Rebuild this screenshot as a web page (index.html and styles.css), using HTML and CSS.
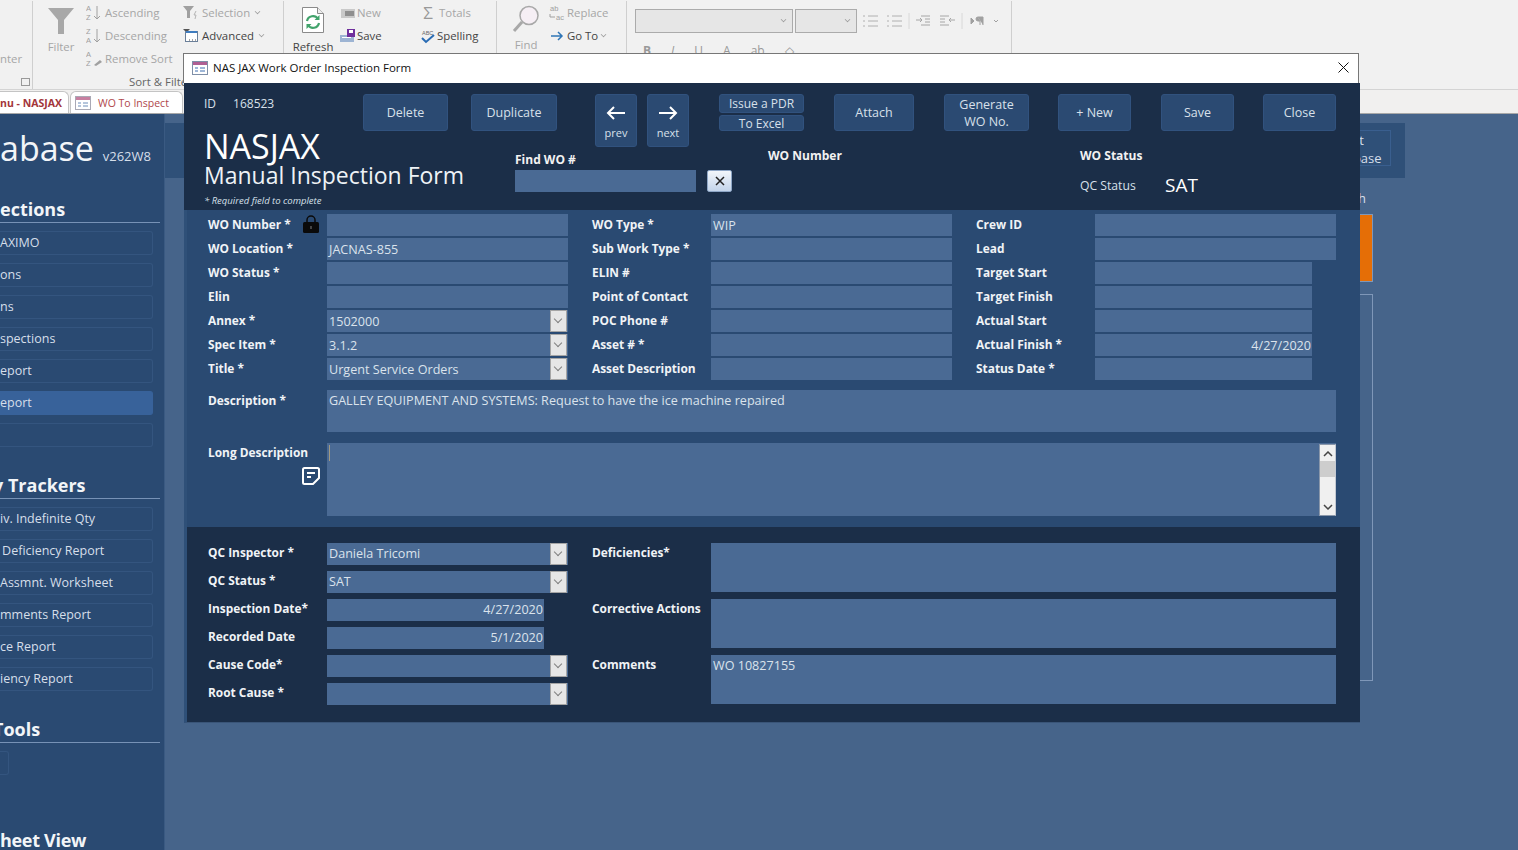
FILE: index.html
```html
<!DOCTYPE html>
<html lang="en">
<head>
    <meta charset="UTF-8">
    <meta name="viewport" content="width=device-width, initial-scale=1.0">
    <title>NAS JAX Work Order Inspection Form</title>
    <link rel="stylesheet" href="styles.css">
</head>
<body>
    <!-- Access ribbon behind the form -->
    <div class="ribbon">
        <div class="group group-clip">
            <div class="clip-text">nter</div>
            <span class="launcher"></span>
        </div>
        <div class="group group-sort">
            <div class="big-item filter-item">
                <svg width="28" height="26" viewBox="0 0 28 26"><path d="M1 0h26L17 12v14h-6V12z" fill="#a8a8a8"/></svg>
                <span>Filter</span>
            </div>
            <div class="small-col sort-col">
                <div class="small-item"><svg width="18" height="18" viewBox="0 0 18 18"><text x="0" y="7" class="tiny">A</text><text x="0" y="16" class="tiny">Z</text><path d="M11 2v13M8 12l3 3 3-3" fill="none" stroke="#a0a0a0"/></svg>Ascending</div>
                <div class="small-item"><svg width="18" height="18" viewBox="0 0 18 18"><text x="0" y="7" class="tiny">Z</text><text x="0" y="16" class="tiny">A</text><path d="M11 2v13M8 12l3 3 3-3" fill="none" stroke="#a0a0a0"/></svg>Descending</div>
                <div class="small-item"><svg width="18" height="18" viewBox="0 0 18 18"><text x="0" y="7" class="tiny">A</text><text x="0" y="16" class="tiny">Z</text><path d="M8 15l6-5 2 2-6 4z" fill="#a0a0a0"/></svg>Remove Sort</div>
            </div>
            <div class="small-col select-col">
                <div class="small-item"><svg width="16" height="16" viewBox="0 0 16 16"><path d="M0 1h11L7 6v7H4V6z" fill="#a0a0a0"/><path d="M13 6l-2 4h2l-1 4" fill="none" stroke="#b5b5b5"/></svg>Selection <i class="drop"></i></div>
                <div class="small-item dark"><svg width="16" height="16" viewBox="0 0 16 16"><path d="M0 1h7L4 4v2H3V4z" fill="#555"/><rect x="2.500" y="3.500" width="12" height="10" fill="#fff" stroke="#6a7f99"/><path d="M3 3h11v2H3z" fill="#3f7cbf"/><path d="M6 12h1M9 12h1M12 12h1" stroke="#444"/></svg>Advanced <i class="drop"></i></div>
                <div class="group-label sort-label">Sort &amp; Filter</div>
            </div>
        </div>
        <div class="group group-records">
            <div class="big-item refresh-item">
                <svg width="24" height="28" viewBox="0 0 24 28"><path d="M1.500 1.500h15l6 6v19h-21z" fill="#fff" stroke="#8a8a8a"/><path d="M16.500 1.500v6h6" fill="#eee" stroke="#8a8a8a"/><path d="M6 15a6 6 0 0 1 11-2M18 17a6 6 0 0 1-11 2" fill="none" stroke="#41a36b" stroke-width="2.200"/><path d="M18.500 9v5h-5zM5.500 23v-5h5z" fill="#41a36b"/></svg>
                <span>Refresh</span>
            </div>
            <div class="small-col new-col">
                <div class="small-item"><svg width="16" height="14" viewBox="0 0 16 14"><rect x="1" y="3" width="14" height="9" fill="#c9c9c9"/><rect x="5" y="5" width="9" height="5" fill="#8f8f8f"/></svg>New</div>
                <div class="small-item dark"><svg width="16" height="14" viewBox="0 0 16 14"><rect x="0" y="6" width="14" height="7" fill="#9db4d3"/><rect x="2" y="8" width="9" height="1" fill="#fff"/><rect x="7" y="0" width="8" height="8" fill="#6f2f9c"/><rect x="9" y="1" width="4" height="3" fill="#fff"/></svg>Save</div>
            </div>
            <div class="small-col totals-col">
                <div class="small-item"><span class="sigma">&Sigma;</span>Totals</div>
                <div class="small-item dark"><svg width="16" height="16" viewBox="0 0 16 16"><text x="2" y="7" class="abc">ABC</text><path d="M2 10l4 4 8-7" fill="none" stroke="#2a6cb4" stroke-width="2"/></svg>Spelling</div>
            </div>
        </div>
        <div class="group group-find">
            <div class="big-item find-item">
                <svg width="28" height="28" viewBox="0 0 28 28"><circle cx="17" cy="10.500" r="9" fill="#f6eff5" stroke="#a8a8a8" stroke-width="1.500"/><path d="M10 17L2 26" stroke="#a8a8a8" stroke-width="3"/></svg>
                <span>Find</span>
            </div>
            <div class="small-col">
                <div class="small-item"><svg width="17" height="18" viewBox="0 0 17 18"><text x="1" y="7" class="tiny">ab</text><text x="7" y="16" class="tiny">ac</text><path d="M1 10v3h5" fill="none" stroke="#a0a0a0"/></svg>Replace</div>
                <div class="small-item dark"><svg width="17" height="16" viewBox="0 0 17 16"><path d="M2 8h11M9 4l4 4-4 4" fill="none" stroke="#2f75b5" stroke-width="1.500"/></svg>Go To <i class="drop"></i></div>
            </div>
        </div>
        <div class="group group-text">
            <div class="text-row">
                <span class="ribbon-combo font-combo"><i class="drop"></i></span>
                <span class="ribbon-combo size-combo"><i class="drop"></i></span>
                <svg class="text-icons" width="146" height="16" viewBox="0 0 146 16">
                    <path d="M1 3h2M1 8h2M1 13h2M6 3h10M6 8h10M6 13h10M25 3h2M25 8h2M25 13h2M30 3h10M30 8h10M30 13h10" stroke="#b0b0b0" fill="none"/>
                    <path d="M47 0v16" stroke="#d8d8d8"/>
                    <path d="M59 3h9M63 6h5M63 9h5M59 12h9M54 7h6M58 5l2 2-2 2" stroke="#a6a6a6" fill="none"/>
                    <path d="M78 3h9M78 6h5M78 9h5M78 12h9M93 7h-6M89 5l-2 2 2 2" stroke="#a6a6a6" fill="none"/>
                    <path d="M100 0v16" stroke="#d8d8d8"/>
                    <path d="M109 5l3 3-3 3zM116 4h5v8M118 4v8M116 4a2 2 0 0 0 0 4h2" fill="#a0a0a0" stroke="#a0a0a0"/>
                    <path d="M132 7l2 2 2-2" stroke="#a0a0a0" fill="none"/>
                </svg>
            </div>
            <div class="format-row">
                <b>B</b><i>I</i><u>U</u><span class="format-gap">A</span><span>ab</span><span>&#9671;</span>
            </div>
        </div>
    </div>

    <!-- Navigation tabs -->
    <div class="tabs">
        <div class="tab tab-menu">nu - NASJAX</div>
        <div class="tab tab-form">
            <svg class="form-icon" width="16" height="14" viewBox="0 0 16 14"><rect x=".5" y=".5" width="15" height="13" fill="#fff" stroke="#a9a9b5"/><rect x="1" y="1" width="14" height="3" fill="#c77fa0"/><path d="M3 7h3M3 10h3M8 7h5M8 10h5" stroke="#6d8db8"/></svg>
            WO To Inspect
        </div>
    </div>

    <!-- Main menu form behind the popup -->
    <div class="main">
        <aside class="sidebar">
            <div class="side-title">abase <small>v262W8</small></div>
            <div class="side-head first">ections</div>
            <div class="side-links">
                <div class="side-link">AXIMO</div>
                <div class="side-link">ons</div>
                <div class="side-link">ns</div>
                <div class="side-link">spections</div>
                <div class="side-link">eport</div>
                <div class="side-link active">eport</div>
                <div class="side-link"></div>
            </div>
            <div class="side-head cut-trackers">y Trackers</div>
            <div class="side-links">
                <div class="side-link">iv. Indefinite Qty</div>
                <div class="side-link">&#8201;Deficiency Report</div>
                <div class="side-link">Assmnt. Worksheet</div>
                <div class="side-link">mments Report</div>
                <div class="side-link">ce Report</div>
                <div class="side-link">iency Report</div>
            </div>
            <div class="side-head cut-tools">Tools</div>
            <div class="side-links">
                <div class="side-link tool-link"></div>
            </div>
            <div class="side-head last">heet View</div>
        </aside>
        <div class="content">
            <div class="content-head">
                <div class="exit-btn">Exit<br>Database</div>
            </div>
            <div class="content-stub">
                <div class="stub-h">h</div>
                <div class="stub-orange"></div>
                <div class="stub-outline"></div>
            </div>
        </div>
    </div>

    <!-- Popup form -->
    <div class="window">
        <div class="titlebar">
            <svg class="form-icon" width="16" height="14" viewBox="0 0 16 14"><rect x=".5" y=".5" width="15" height="13" fill="#fff" stroke="#7f8fa8"/><rect x="1" y="1" width="14" height="3" fill="#b05f93"/><path d="M3 7h3M3 10h3M8 7h5M8 10h5" stroke="#3f6fb0"/></svg>
            <span>NAS JAX Work Order Inspection Form</span>
            <svg class="close-x" width="11" height="11" viewBox="0 0 11 11"><path d="M.5.500l10 10M10.500.500l-10 10" stroke="#111" fill="none"/></svg>
        </div>

        <div class="form-head">
            <div class="head-top">
                <div class="record-id"><span>ID</span><span>168523</span></div>
                <button class="btn w-delete">Delete</button>
                <button class="btn w-dup">Duplicate</button>
                <button class="btn nav-btn w-prev">
                    <svg width="20" height="14" viewBox="0 0 20 14"><path d="M19 7H2M8 1L2 7l6 6" fill="none" stroke="#fff" stroke-width="2"/></svg>
                    <span>prev</span>
                </button>
                <button class="btn nav-btn w-next">
                    <svg width="20" height="14" viewBox="0 0 20 14"><path d="M1 7h17M12 1l6 6-6 6" fill="none" stroke="#fff" stroke-width="2"/></svg>
                    <span>next</span>
                </button>
                <div class="btn-stack">
                    <button class="btn">Issue a PDR</button>
                    <button class="btn">To Excel</button>
                </div>
                <button class="btn w-attach">Attach</button>
                <button class="btn two-line w-gen">Generate<br>WO No.</button>
                <button class="btn w-new">+ New</button>
                <button class="btn w-save">Save</button>
                <button class="btn w-close">Close</button>
            </div>
            <div class="head-bottom">
                <div class="form-title">
                    <h1>NASJAX</h1>
                    <h2>Manual Inspection Form</h2>
                    <p>* Required field to complete</p>
                </div>
                <div class="find-wo">
                    <label>Find WO #</label>
                    <div class="find-row">
                        <div class="box find-box"></div>
                        <button class="clear-btn">
                            <svg width="10" height="10" viewBox="0 0 10 10"><path d="M1 1l8 8M9 1L1 9" stroke="#222" stroke-width="1.500"/></svg>
                        </button>
                    </div>
                </div>
                <div class="head-number">WO Number</div>
                <div class="head-status">
                    <div class="label">WO Status</div>
                    <div class="qc-row"><span>QC Status</span><strong>SAT</strong></div>
                </div>
            </div>
        </div>

        <div class="form-main">
            <div class="field-grid">
                <div class="field"><label>WO Number *<svg class="lock" width="16" height="18" viewBox="0 0 16 18"><path d="M4 8V5a4 4 0 0 1 8 0v3" fill="none" stroke="#0a0a0a" stroke-width="1.500"/><rect y="7" width="16" height="11" rx="1.500" fill="#0a0a0a"/><rect x="7" y="11" width="2" height="3" fill="#444"/></svg></label><div class="box"></div></div>
                <div class="field"><label>WO Type *</label><div class="box">WIP</div></div>
                <div class="field"><label>Crew ID</label><div class="box"></div></div>

                <div class="field"><label>WO Location *</label><div class="box">JACNAS-855</div></div>
                <div class="field"><label>Sub Work Type *</label><div class="box"></div></div>
                <div class="field"><label>Lead</label><div class="box"></div></div>

                <div class="field"><label>WO Status *</label><div class="box"></div></div>
                <div class="field"><label>ELIN #</label><div class="box"></div></div>
                <div class="field"><label>Target Start</label><div class="box short"></div></div>

                <div class="field"><label>Elin</label><div class="box"></div></div>
                <div class="field"><label>Point of Contact</label><div class="box"></div></div>
                <div class="field"><label>Target Finish</label><div class="box short"></div></div>

                <div class="field"><label>Annex *</label><div class="box combo">1502000<span class="arrow"></span></div></div>
                <div class="field"><label>POC Phone #</label><div class="box"></div></div>
                <div class="field"><label>Actual Start</label><div class="box short"></div></div>

                <div class="field"><label>Spec Item *</label><div class="box combo">3.1.2<span class="arrow"></span></div></div>
                <div class="field"><label>Asset # *</label><div class="box"></div></div>
                <div class="field"><label>Actual Finish *</label><div class="box short date">4/27/2020</div></div>

                <div class="field"><label>Title *</label><div class="box combo">Urgent Service Orders<span class="arrow"></span></div></div>
                <div class="field"><label>Asset Description</label><div class="box"></div></div>
                <div class="field"><label>Status Date *</label><div class="box short"></div></div>
            </div>

            <div class="field wide desc-field">
                <label>Description *</label>
                <div class="box area">GALLEY EQUIPMENT AND SYSTEMS: Request to have the ice machine repaired</div>
            </div>
            <div class="field wide long-field">
                <label class="long-label">Long Description
                    <svg class="note" width="18" height="18" viewBox="0 0 18 18"><path d="M2.500 1h13A1.500 1.500 0 0 1 17 2.500V11l-6 6H2.500A1.500 1.500 0 0 1 1 15.500v-13A1.500 1.500 0 0 1 2.500 1z" fill="none" stroke="#fff" stroke-width="2"/><path d="M5 6h8M5 10h4" stroke="#fff" stroke-width="2"/></svg>
                </label>
                <div class="box area long-box">
                    <span class="caret"></span>
                    <div class="scrollbar">
                        <svg width="10" height="6" viewBox="0 0 10 6"><path d="M1 5l4-4 4 4" fill="none" stroke="#444" stroke-width="1.500"/></svg>
                        <span class="thumb"></span>
                        <svg class="scroll-down" width="10" height="6" viewBox="0 0 10 6"><path d="M1 1l4 4 4-4" fill="none" stroke="#444" stroke-width="1.500"/></svg>
                    </div>
                </div>
            </div>
        </div>

        <div class="form-qc">
            <div class="qc-left">
                <div class="field"><label>QC Inspector *</label><div class="box combo">Daniela Tricomi<span class="arrow"></span></div></div>
                <div class="field"><label>QC Status *</label><div class="box combo">SAT<span class="arrow"></span></div></div>
                <div class="field"><label>Inspection Date*</label><div class="box date-short">4/27/2020</div></div>
                <div class="field"><label>Recorded Date</label><div class="box date-short">5/1/2020</div></div>
                <div class="field"><label>Cause Code*</label><div class="box combo"><span class="arrow"></span></div></div>
                <div class="field"><label>Root Cause *</label><div class="box combo"><span class="arrow"></span></div></div>
            </div>
            <div class="qc-right">
                <div class="field wide"><label>Deficiencies*</label><div class="box area tall"></div></div>
                <div class="field wide"><label>Corrective Actions</label><div class="box area tall"></div></div>
                <div class="field wide"><label>Comments</label><div class="box area tall">WO 10827155</div></div>
            </div>
        </div>
    </div>
</body>
</html>
```

FILE: styles.css
```css
* {
    box-sizing: border-box;
}

html, body {
    height: 100%;
}

body {
    margin: 0;
    overflow: hidden;
    font-family: "Open Sans", "Noto Sans", sans-serif;
    font-size: 13px;
    background-color: #46648a;
    color: #333;
}

/* ribbon */
.ribbon {
    display: flex;
    height: 90px;
    background-color: #f1f1f1;
    border-bottom: 1px solid #d4d4d4;
    font-size: 11.4px;
    color: #a6a6a6;
}

.group {
    position: relative;
    display: flex;
    height: 88px;
    margin-top: 1px;
    border-right: 1px solid #cfcfcf;
}

.group-clip {
    width: 33px;
}

.clip-text {
    margin-top: 50px;
}

.launcher {
    position: absolute;
    left: 21px;
    bottom: 3px;
    width: 9px;
    height: 8px;
    border: 1px solid #999;
}

.group-sort {
    width: 251px;
    padding-left: 14px;
}

.group-records {
    width: 213px;
    padding-left: 9px;
}

.group-find {
    width: 130px;
    padding-left: 15px;
}

.group-text {
    width: 385px;
    padding-left: 8px;
    display: block;
}

.big-item {
    display: flex;
    flex-direction: column;
    align-items: center;
    gap: 5px;
}

.filter-item {
    width: 28px;
    margin-right: 11px;
    padding-top: 7px;
}

.refresh-item {
    width: 40px;
    margin-right: 7px;
    padding-top: 5px;
    color: #444;
}

.find-item {
    width: 28px;
    margin-right: 9px;
    padding-top: 4px;
    gap: 4px;
}

.small-col {
    display: flex;
    flex-direction: column;
}

.sort-col {
    width: 97px;
}

.new-col {
    width: 80px;
}

.select-col .small-item {
    gap: 3px;
}

.small-item {
    display: flex;
    align-items: center;
    gap: 1px;
    height: 23px;
    white-space: nowrap;
}

.small-item.dark {
    color: #444;
}

.tiny {
    font-family: "Liberation Sans", sans-serif;
    font-size: 7.5px;
    fill: #a0a0a0;
}

.abc {
    font-family: "Liberation Sans", sans-serif;
    font-size: 5.500px;
    fill: #666;
}

.sigma {
    width: 16px;
    margin-right: 2px;
    font-size: 17px;
    line-height: 1;
    text-align: center;
    color: #999;
}

.drop {
    display: inline-block;
    width: 5px;
    height: 5px;
    margin-left: 2px;
    margin-bottom: 3px;
    border-right: 1px solid #999;
    border-bottom: 1px solid #999;
    transform: rotate(45deg) scale(.8);
}

.group-label {
    position: absolute;
    bottom: 0;
    white-space: nowrap;
    color: #666;
}

.sort-label {
    left: 96px;
}

.text-row {
    display: flex;
    align-items: center;
    gap: 2px;
    padding-top: 8px;
}

.ribbon-combo {
    display: flex;
    justify-content: flex-end;
    align-items: center;
    height: 24px;
    padding-right: 6px;
    background-color: #e6e6e6;
    border: 1px solid #ababab;
}

.font-combo {
    width: 158px;
}

.size-combo {
    width: 62px;
}

.text-icons {
    margin-left: 3px;
}

.format-row {
    display: flex;
    gap: 20px;
    padding: 9px 0 0 8px;
    font-size: 12px;
    color: #999;
}

/* tabs */
.tabs {
    display: flex;
    align-items: flex-end;
    height: 24px;
    padding-top: 2px;
    background-color: #f1f0ef;
    border-bottom: 1px solid #a8a8a8;
}

.tab {
    display: flex;
    align-items: center;
    height: 22px;
    background-color: #fff;
    border: 1px solid #c4c4c4;
    border-bottom: 0;
    border-radius: 0 6px 0 0;
    font-size: 10.5px;
    color: #a3353a;
}

.tab-menu {
    width: 69px;
    border-left: 0;
    font-weight: 700;
}

.tab-form {
    width: 113px;
    margin-left: 1px;
    gap: 7px;
    padding-left: 4px;
    border-radius: 6px 6px 0 0;
    color: #b0484c;
}

/* main menu behind the popup */
.main {
    display: flex;
    height: 736px;
}

.sidebar {
    flex: none;
    width: 165px;
    height: 100%;
    padding-top: 12px;
    overflow: hidden;
    background-color: #2a4a72;
    border-right: 1px solid #3a5a82;
    font-size: 12.5px;
    color: #d6dfea;
}

.side-title {
    height: 45px;
    font-size: 34px;
    line-height: 44px;
    color: #f2f5f8;
    white-space: nowrap;
}

.side-title small {
    font-size: 13px;
    color: #d6dfea;
}

.side-head {
    height: 28px;
    margin: 24px 4px 8px 0;
    border-bottom: 1px solid #7792b6;
    font-size: 18px;
    font-weight: 700;
    line-height: 29px;
    color: #f2f5f8;
    white-space: nowrap;
}

.side-head.cut-trackers {
    text-indent: -7px;
}

.side-head.cut-tools {
    text-indent: -7px;
}

.side-head.last {
    margin-top: 51px;
    letter-spacing: -.3px;
}

.side-links {
    display: flex;
    flex-direction: column;
    gap: 8px;
}

.side-link {
    width: 153px;
    height: 24px;
    border: 1px solid #34557f;
    border-left: 0;
    border-radius: 0 3px 3px 0;
    line-height: 22px;
    white-space: nowrap;
}

.side-link.active {
    background-color: #38629a;
    border-color: #38629a;
}

.side-link.tool-link {
    width: 9px;
}

.content {
    flex: 1;
}

.content-head {
    display: flex;
    justify-content: flex-end;
    width: 1240px;
    height: 55px;
    margin-top: 9px;
    padding: 7px 14px 0 0;
    background-color: #2f5078;
}

.exit-btn {
    width: 76px;
    height: 36px;
    border: 1px solid #3a5f8f;
    font-size: 13px;
    line-height: 18px;
    text-align: center;
    color: #d6dfea;
}

.content-stub {
    display: flex;
    flex-direction: column;
    align-items: flex-end;
    width: 1208px;
    color: #d6dfea;
}

.stub-h {
    height: 36px;
    padding-top: 11px;
    line-height: 18px;
    margin-right: 7px;
}

.stub-orange {
    width: 30px;
    height: 68px;
    background-color: #e56e06;
    border: 1px solid #7f97b8;
}

.stub-outline {
    width: 30px;
    height: 387px;
    margin-top: 12px;
    border: 1px solid #7f97b8;
}

/* popup window */
.window {
    position: absolute;
    left: 183px;
    top: 53px;
    width: 1177px;
    height: 670px;
}

.titlebar {
    display: flex;
    align-items: center;
    height: 30px;
    width: 1176px;
    padding: 0 8px 2px 8px;
    background-color: #fff;
    border: 1px solid #777;
    border-bottom: 0;
    font-size: 11.5px;
    color: #111;
}

.titlebar .form-icon {
    margin-right: 5px;
}

.close-x {
    margin-left: auto;
    margin-right: 1px;
}

.form-head,
.form-main,
.form-qc {
    margin-left: 1px;
    width: 1176px;
}

.form-head {
    height: 127px;
    padding: 11px 0 0 20px;
    background-color: #1b2e48;
    color: #d8e0ea;
}

.head-top {
    display: flex;
    align-items: flex-start;
    height: 53px;
}

.record-id {
    display: flex;
    gap: 17px;
    width: 159px;
    padding-top: 1px;
    font-size: 12px;
    line-height: 18px;
}

.btn {
    height: 37px;
    padding: 0 0 1px;
    background-color: #2b4a72;
    border: 1px solid #31527e;
    border-radius: 3px;
    font-family: inherit;
    font-size: 12.5px;
    color: #d8e0ea;
}

.two-line {
    padding: 0;
    line-height: 17px;
}

.w-delete { width: 85px; }
.w-dup { width: 86px; margin-left: 23px; }
.w-prev { width: 42px; margin-left: 38px; }
.w-next { width: 42px; margin-left: 10px; }
.w-attach { width: 80px; margin-left: 30px; }
.w-gen { width: 85px; margin-left: 30px; }
.w-new { width: 73px; margin-left: 29px; }
.w-save { width: 73px; margin-left: 30px; }
.w-close { width: 73px; margin-left: 29px; }

.nav-btn {
    display: flex;
    flex-direction: column;
    align-items: center;
    gap: 5px;
    height: 53px;
    padding-top: 11px;
    font-size: 11px;
}

.btn-stack {
    display: flex;
    flex-direction: column;
    gap: 2px;
    width: 85px;
    margin-left: 30px;
}

.btn-stack .btn {
    height: 19px;
    padding: 0;
    font-size: 12px;
    line-height: 16px;
}

.btn-stack .btn + .btn {
    height: 16px;
}

.head-bottom {
    display: flex;
}

.form-title {
    width: 311px;
    margin-top: -18px;
    color: #fff;
}

.form-title h1 {
    margin: 0;
    font-size: 34px;
    font-weight: 400;
    line-height: 34px;
}

.form-title h2 {
    margin: 0;
    font-size: 23px;
    font-weight: 400;
    line-height: 24px;
    color: #eef2f6;
}

.form-title p {
    margin: 7px 0 0;
    font-size: 9.5px;
    font-style: italic;
    line-height: 14px;
    color: #d8e0ea;
}

.find-wo {
    width: 253px;
    padding-top: 4px;
}

.find-wo label,
.head-number,
.head-status .label {
    font-size: 12px;
    font-weight: 700;
    line-height: 18px;
    color: #f2f2f2;
}

.find-wo label {
    display: block;
    height: 19px;
}

.find-row {
    display: flex;
    gap: 11px;
}

.box.find-box {
    width: 181px;
}

.qc-row {
    display: flex;
    align-items: center;
    margin-top: 7px;
    font-size: 12.2px;
}

.head-number {
    width: 312px;
}

.qc-row span {
    width: 85px;
}

.qc-row strong {
    font-size: 19px;
    font-weight: 400;
    color: #fff;
}

.clear-btn {
    display: flex;
    align-items: center;
    justify-content: center;
    width: 25px;
    height: 22px;
    padding: 0;
    background: linear-gradient(#f2f6fb, #c3d4ea);
    border: 1px solid #8ea6c6;
    border-radius: 2px;
}

.form-main {
    height: 317px;
    padding: 4px 0 0 21px;
    background-color: #2a4a72;
    border-left: 3px solid #2f5078;
}

.field-grid {
    display: grid;
    grid-template-columns: repeat(3, 360px);
    column-gap: 24px;
    row-gap: 2px;
}

.field {
    display: flex;
    align-items: flex-start;
}

.field label {
    display: flex;
    align-items: flex-start;
    flex: none;
    width: 119px;
    font-size: 11.9px;
    font-weight: 700;
    line-height: 18px;
    white-space: nowrap;
    color: #f0f3f6;
}

.field-grid label,
.desc-field label {
    padding-top: 1px;
}

.lock {
    margin: 0 8px 0 auto;
}

.box {
    position: relative;
    width: 241px;
    height: 22px;
    padding: 0 2px;
    background-color: #4a6a94;
    font-size: 12.6px;
    line-height: 23px;
    white-space: nowrap;
    color: #dbe3ec;
}

.box.short {
    width: 217px;
}

.box.date,
.box.date-short {
    padding-right: 1px;
    text-align: right;
}

.box.date-short {
    width: 217px;
}

.qc-left .box {
    line-height: 21px;
}

.arrow {
    position: absolute;
    right: 1px;
    top: 0;
    width: 17px;
    height: 100%;
    background-color: #e6e6e6;
    border: 1px solid #a5a5a5;
}

.arrow::before {
    content: "";
    position: absolute;
    left: 4px;
    top: 5px;
    width: 5px;
    height: 5px;
    border-right: 1px solid #808080;
    border-bottom: 1px solid #808080;
    transform: rotate(45deg);
}

.wide .box {
    flex: 1;
    width: auto;
}

.desc-field {
    width: 1128px;
    margin-top: 10px;
}

.desc-field .area {
    height: 42px;
}

.long-field {
    width: 1128px;
    margin-top: 11px;
}

.long-label {
    flex-direction: column;
}

.long-label .note {
    margin: 6px 7px 0 auto;
}

.long-field .area {
    height: 73px;
}

.area {
    line-height: 22px;
}

.caret {
    position: absolute;
    left: 2px;
    top: 2px;
    width: 1px;
    height: 16px;
    background-color: #a39a80;
}

.scrollbar {
    position: absolute;
    right: 0;
    top: 1px;
    bottom: 0;
    display: flex;
    flex-direction: column;
    align-items: center;
    width: 17px;
    padding-top: 6px;
    background-color: #f0f0f0;
    border: 1px solid #8a97aa;
    border-right-color: #c4c9d2;
}

.thumb {
    width: 15px;
    height: 16px;
    margin-top: 4px;
    background-color: #cdcdcd;
}

.scroll-down {
    margin-top: auto;
    margin-bottom: 5px;
}

.form-qc {
    display: grid;
    grid-template-columns: 360px 744px;
    column-gap: 24px;
    height: 196px;
    padding: 16px 0 0 21px;
    background-color: #1b2e48;
    border-left: 3px solid #2f5078;
    border-bottom: 1px solid #3a5578;
}

.qc-left {
    display: flex;
    flex-direction: column;
    gap: 6px;
}

.qc-right {
    display: flex;
    flex-direction: column;
    gap: 7px;
}

.box.tall {
    height: 49px;
}
```
